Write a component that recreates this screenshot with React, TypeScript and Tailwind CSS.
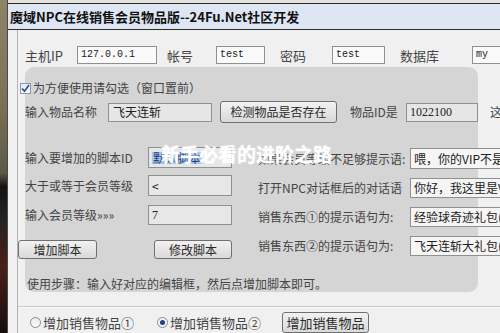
import React from "react";

const cjk = { fontFamily: "'Noto Sans CJK SC', 'Noto Sans', sans-serif" };
const mono = { fontFamily: "'Liberation Mono', 'DejaVu Sans Mono', monospace" };
const serif = { fontFamily: "'Liberation Serif', 'Noto Sans CJK SC', serif" };

function Field({
  w,
  h,
  bg,
  children,
  font,
  size = "text-[12px]",
  className = "",
}: {
  w: string;
  h: string;
  bg: string;
  children?: React.ReactNode;
  font?: React.CSSProperties;
  size?: string;
  className?: string;
}) {
  return (
    <div
      className={`${w} ${h} ${bg} ${size} shrink-0 border border-[#8f9090] flex items-center pl-[3px] overflow-hidden whitespace-nowrap text-[#222] leading-none ${className}`}
      style={font ?? cjk}
    >
      {children}
    </div>
  );
}

function Btn({ w, h, children, className = "" }: { w: string; h: string; children: React.ReactNode; className?: string }) {
  return (
    <div
      className={`${w} ${h} shrink-0 rounded-[3px] border border-[#707070] bg-gradient-to-b from-[#f2f2f2] to-[#d9d9d9] flex items-center justify-center text-[12px] text-[#2a2a2a] leading-none whitespace-nowrap ${className}`}
      style={cjk}
    >
      {children}
    </div>
  );
}

function Label({ w, children, className = "" }: { w?: string; children: React.ReactNode; className?: string }) {
  return (
    <span className={`${w ?? ""} shrink-0 text-[12px] text-[#444] whitespace-nowrap leading-none ${className}`} style={cjk}>
      {children}
    </span>
  );
}

export default function App() {
  return (
    <div className="relative flex w-[500px] h-[333px] overflow-hidden bg-[#f0f0f0]">
      {/* background strip */}
      <div className="w-[7px] h-full shrink-0 bg-[linear-gradient(180deg,#8d8468_0%,#7b7358_30%,#5e5848_52%,#15130f_56%,#222_66%,#4a1f18_80%,#140d0b_100%)]" />

      {/* window */}
      <div className="flex-1 min-w-0 flex flex-col border-l border-[#4a4a4a]">
        <div className="h-[3px] shrink-0 bg-[#e4e2dc]" />
        <div className="h-[27px] shrink-0 border-y border-[#2b2b2b] bg-[#dde6f2] flex items-center pl-[2px]">
          <span className="text-[13px] font-bold text-[#111] whitespace-nowrap leading-none" style={cjk}>
            魔域NPC在线销售会员物品版--24Fu.Net社区开发
          </span>
        </div>

        {/* client */}
        <div className="flex-1 flex min-h-0">
          <div className="w-[9px] shrink-0" />
          <div className="flex-1 min-w-0 flex flex-col border-l border-[#b4b4b4]">
            {/* row 1 */}
            <div className="mt-[16px] h-[18px] flex items-center">
              <Label w="w-[59px]" className="pl-[7px] text-[13px]">主机IP</Label>
              <Field w="w-[80px]" h="h-[18px]" bg="bg-[#fafafa]" font={mono} size="text-[10px]">127.0.0.1</Field>
              <Label w="w-[59px]" className="pl-[10px] text-[13px]">帐号</Label>
              <Field w="w-[49px]" h="h-[18px]" bg="bg-[#fafafa]" font={mono} size="text-[10px]">test</Field>
              <Label w="w-[67px]" className="pl-[15px] text-[13px]">密码</Label>
              <Field w="w-[53px]" h="h-[18px]" bg="bg-[#fafafa]" font={mono} size="text-[10px]">test</Field>
              <Label w="w-[87px]" className="pl-[15px] text-[13px]">数据库</Label>
              <Field w="w-[60px]" h="h-[18px]" bg="bg-[#fafafa]" font={mono} size="text-[10px]">my</Field>
            </div>

            {/* grey panel */}
            <div className="mt-[3px] ml-[7px] w-[453px] h-[225px] shrink-0 rounded-[9px] bg-[#d5d5d5] flex flex-col">
              {/* checkbox row */}
              <div className="mt-[14px] h-[14px] -ml-[5px] flex items-center">
                <div className="w-[11px] h-[11px] border border-[#8799ad] bg-gradient-to-b from-[#e6e9f2] to-[#f8f9fc] flex items-center justify-center">
                  <svg width="9" height="9" viewBox="0 0 9 9">
                    <path d="M1 4.5 L3.5 7.2 L8 1" fill="none" stroke="#2f4f9a" strokeWidth="1.7" />
                  </svg>
                </div>
                <Label className="ml-[2px]">为方便使用请勾选（窗口置前）</Label>
              </div>

              {/* item row */}
              <div className="mt-[6px] h-[22px] flex items-center">
                <Label w="w-[83px]">输入物品名称</Label>
                <Field w="w-[104px]" h="h-[19px]" bg="bg-[#e6e6e6]" className="pl-[4px]">飞天连斩</Field>
                <Btn w="w-[117px]" h="h-[22px]" className="ml-[8px]">检测物品是否存在</Btn>
                <Label w="w-[69px]" className="pl-[13px]">物品ID是</Label>
                <Field w="w-[72px]" h="h-[19px]" bg="bg-[#e6e6e6]" font={serif}>1022100</Field>
                <Label className="pl-[12px]">这</Label>
              </div>

              {/* two columns */}
              <div className="mt-[24px] flex items-start">
                <div className="w-[207px] shrink-0 flex flex-col">
                  <div className="h-[21px] flex items-center justify-between">
                    <Label>输入要增加的脚本ID</Label>
                    <Field w="w-[84px]" h="h-[21px]" bg="bg-[#e7e7e7]" className="pl-[2px]">
                      <span className="bg-[#a9c6ea] text-[#1b3f80] px-[1px]">默认脚本</span>
                    </Field>
                  </div>
                  <div className="mt-[7px] h-[21px] flex items-center justify-between">
                    <Label>大于或等于会员等级</Label>
                    <Field w="w-[84px]" h="h-[21px]" bg="bg-[#e7e7e7]">&lt;</Field>
                  </div>
                  <div className="mt-[9px] h-[20px] flex items-center justify-between">
                    <Label>输入会员等级»»»</Label>
                    <Field w="w-[84px]" h="h-[20px]" bg="bg-[#e7e7e7]" font={serif}>7</Field>
                  </div>
                  <div className="mt-[15px] h-[19px] -ml-[7px] flex items-center justify-between">
                    <Btn w="w-[79px]" h="h-[19px]">增加脚本</Btn>
                    <Btn w="w-[78px]" h="h-[19px]">修改脚本</Btn>
                  </div>
                </div>

                <div className="ml-[26px] mt-[1px] flex flex-col">
                  <div className="h-[21px] flex items-center">
                    <Label w="w-[152px]">如果会员等级不足够提示语:</Label>
                    <Field w="w-[100px]" h="h-[21px]" bg="bg-[#f5f5f5]">喂，你的VIP不是</Field>
                  </div>
                  <div className="mt-[9px] h-[20px] flex items-center">
                    <Label w="w-[152px]">打开NPC对话框后的对话语</Label>
                    <Field w="w-[100px]" h="h-[20px]" bg="bg-[#f5f5f5]">你好，我这里是VIP</Field>
                  </div>
                  <div className="mt-[9px] h-[20px] flex items-center">
                    <Label w="w-[152px]">销售东西①的提示语句为:</Label>
                    <Field w="w-[100px]" h="h-[20px]" bg="bg-[#f5f5f5]">经验球奇迹礼包(</Field>
                  </div>
                  <div className="mt-[9px] h-[20px] flex items-center">
                    <Label w="w-[152px]">销售东西②的提示语句为:</Label>
                    <Field w="w-[100px]" h="h-[20px]" bg="bg-[#f5f5f5]">飞天连斩大礼包(</Field>
                  </div>
                </div>
              </div>

              <div className="mt-[17px] h-[16px] pl-[2px] flex items-center">
                <Label>使用步骤：输入好对应的编辑框，然后点增加脚本即可。</Label>
              </div>
            </div>

            {/* separator */}
            <div className="mt-[14px] border-t border-[#c9c9c9] border-b border-b-[#fbfbfb]" />

            {/* radio row */}
            <div className="mt-[4px] h-[21px] flex items-center">
              <div className="ml-[12px] w-[11px] h-[11px] shrink-0 rounded-full border border-[#8a8a8a] bg-gradient-to-b from-[#e9e9e9] to-[#fbfbfb]" />
              <Label w="w-[114px]" className="ml-[2px] text-[13px]">增加销售物品①</Label>
              <div className="w-[11px] h-[11px] shrink-0 rounded-full border border-[#8a8a8a] bg-[#f4f4f4] flex items-center justify-center">
                <div className="w-[5px] h-[5px] rounded-full bg-[#1f3f86]" />
              </div>
              <Label w="w-[112px]" className="ml-[2px] text-[13px]">增加销售物品②</Label>
              <Btn w="w-[87px]" h="h-[21px]" className="text-[13px]">增加销售物品</Btn>
            </div>
          </div>
        </div>
      </div>

      {/* watermark overlay */}
      <div
        className="absolute left-[161px] top-[144px] text-[19px] font-bold text-white whitespace-nowrap leading-none [text-shadow:0_0_2px_rgba(255,255,255,0.7)]"
        style={cjk}
      >
        新手必看的进阶之路
      </div>
    </div>
  );
}
